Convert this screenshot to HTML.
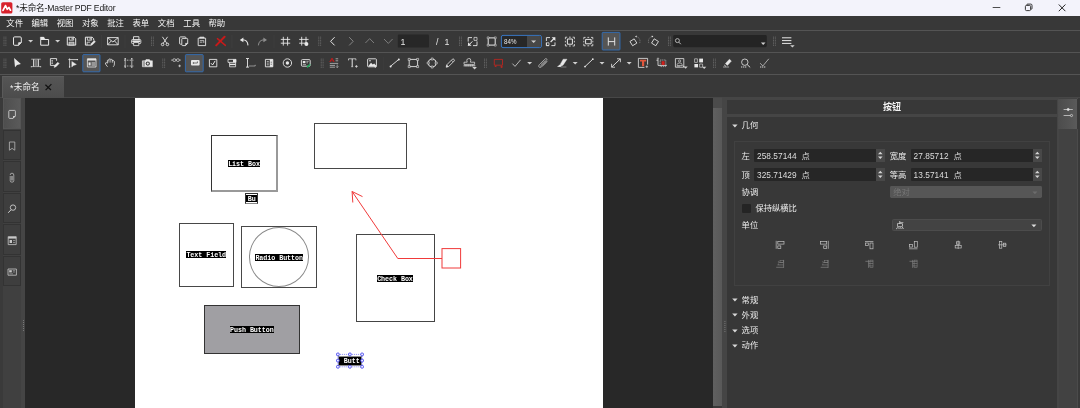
<!DOCTYPE html>
<html><head><meta charset="utf-8"><title>Master PDF Editor</title>
<style>
*{box-sizing:border-box;margin:0;padding:0}
html,body{width:1080px;height:408px;overflow:hidden;background:#383838;font-family:"Liberation Sans","Noto Sans CJK SC",sans-serif;}
.abs,.abs *{position:absolute}
#title{left:0;top:0;width:1080px;height:16px;background:#f3f3fb}
#title .t{left:16px;top:0;font-size:8.6px;line-height:16px;color:#151515;white-space:nowrap;letter-spacing:-0.15px}
#menu{left:0;top:16px;width:1080px;height:14px;background:#383838}
#menu span{top:0;font-size:8.4px;line-height:14px;color:#f4f4f4;white-space:nowrap}
.hl{position:absolute;left:0;width:1080px;height:1px;background:#545454}
#tab{left:2px;top:76px;width:62px;height:22px;background:linear-gradient(#555,#4c4c4c);border-top:1px solid #5e5e5e;border-left:1px solid #5a5a5a}
#tab span{left:6px;top:0;font-size:8.6px;line-height:20px;color:#f0f0f0;white-space:nowrap}
#doc{left:25px;top:98px;width:688px;height:310px;background:#282828}
#page{left:135px;top:98px;width:468px;height:310px;background:#fff}
#lside{left:0;top:98px;width:25px;height:310px;background:linear-gradient(90deg,#3a3a3a 0,#3a3a3a 3px,#404040 3px,#404040 21.4px,#454545 21.4px)}
.lb{left:3.2px;width:18.2px;height:30.6px;background:#3e3e3e;border:1px solid #333}
#vsb{left:713px;top:98px;width:9.2px;height:308px;background:linear-gradient(90deg,#606060,#595959)}
#vsb i{left:0;top:0;width:9px;height:9.5px;background:#4b4b4b}
#gap{left:722px;top:97.4px;width:337px;height:311px;background:#454545}
#panel{left:727px;top:98px;width:330.3px;height:310px;background:#454545}
#phead{left:0;top:2px;width:330.3px;height:13.8px;background:#383838}
#phead span{left:0;width:330px;text-align:center;top:0;font-size:9px;font-weight:bold;line-height:14.6px;color:#f4f4f4}
#pbody{left:0;top:19px;width:330.3px;height:291px;background:#373737}
#inner{left:7px;top:24px;width:316px;height:144px;border:1px solid #414141;background:#383838}
.lab{font-size:8.3px;line-height:12px;color:#ececec;white-space:nowrap}
.inp{background:#262626;height:12.4px;border-radius:1px}
.inp span{left:3px;top:0.9px;font-size:8.3px;line-height:12.4px;color:#dedede;white-space:nowrap;word-spacing:2.6px;letter-spacing:0.05px}
.inp i{right:0;top:0;width:8.6px;height:12.4px;background:#484848}
#rside{left:1057px;top:98px;width:23px;height:310px;background:linear-gradient(90deg,#454545 0,#454545 1.6px,#4a4a4a 1.6px,#4a4a4a 2.2px,#424242 2.2px,#424242 20.2px,#4b4b4b 20.2px,#4b4b4b 20.9px,#393939 20.9px)}
#rcol{display:none}
#rbtn{left:1.2px;top:0.5px;width:18.4px;height:30.2px;background:linear-gradient(90deg,#4c4c4c,#5a5a5a);box-shadow:1.4px 0 0 #393939}
.flab{font-family:"Liberation Mono",monospace;font-size:6.7px;font-weight:bold;line-height:8.5px;height:7.4px;color:#fff;background:#000;white-space:nowrap;overflow:hidden;text-align:center;letter-spacing:-0.05px}
</style></head><body>
<div id="root" style="position:absolute;left:0;top:0;width:1080px;height:408px;will-change:transform">
<div id="title" class="abs"><svg style="left:0;top:0" width="16" height="16" viewBox="0 0 16 16"><rect x="1.2" y="2.2" width="11.2" height="11.3" rx="1.6" fill="#d8212c"/><path d="M3 10.4L5.5 5.6L7.3 9.3L8.9 7.5L10.5 10.2" fill="none" stroke="#fff" stroke-width="1.7" stroke-linejoin="round" stroke-linecap="round"/></svg><span class="t">*未命名-Master PDF Editor</span>
<svg style="left:980px;top:0" width="100" height="16" viewBox="980 0 100 16" fill="none" stroke="#222" stroke-width="0.8"><path d="M992.7 7.5H1000.3"/><rect x="1025.4" y="5.4" width="5.2" height="5.2" rx="1.1" stroke-width="0.9"/><path d="M1026.8 5.4V5Q1026.8 4.1 1027.6 4.1H1030.8Q1032 4.1 1032 5.3V8.4Q1032 9.2 1031.2 9.2H1030.8" stroke-width="0.9"/><path d="M1058.8 4.5L1065.4 11.2M1065.4 4.5L1058.8 11.2" stroke-width="1"/></svg></div>
<div id="menu" class="abs">
<span style="left:6.3px">文件</span>
<span style="left:31.5px">编辑</span>
<span style="left:56.7px">视图</span>
<span style="left:82px">对象</span>
<span style="left:107.2px">批注</span>
<span style="left:132.5px">表单</span>
<span style="left:157.8px">文档</span>
<span style="left:183.3px">工具</span>
<span style="left:208.5px">帮助</span>
</div>
<div class="hl" style="top:30px"></div><div class="hl" style="top:52px"></div><div class="hl" style="top:74px"></div><div class="hl" style="top:97px;background:#474747"></div>
<svg class="abs" style="left:0;top:30px" width="1080" height="46" viewBox="0 30 1080 46" fill="none" stroke="#e8e8e8" stroke-width="0.9" stroke-linejoin="round"><rect x="3.6" y="36.6" width="0.8" height="1.1" fill="#6c6c6c" stroke="none"/><rect x="5.5" y="36.6" width="0.8" height="1.1" fill="#6c6c6c" stroke="none"/><rect x="3.6" y="38.24" width="0.8" height="1.1" fill="#6c6c6c" stroke="none"/><rect x="5.5" y="38.24" width="0.8" height="1.1" fill="#6c6c6c" stroke="none"/><rect x="3.6" y="39.88" width="0.8" height="1.1" fill="#6c6c6c" stroke="none"/><rect x="5.5" y="39.88" width="0.8" height="1.1" fill="#6c6c6c" stroke="none"/><rect x="3.6" y="41.52" width="0.8" height="1.1" fill="#6c6c6c" stroke="none"/><rect x="5.5" y="41.52" width="0.8" height="1.1" fill="#6c6c6c" stroke="none"/><rect x="3.6" y="43.160000000000004" width="0.8" height="1.1" fill="#6c6c6c" stroke="none"/><rect x="5.5" y="43.160000000000004" width="0.8" height="1.1" fill="#6c6c6c" stroke="none"/><rect x="3.6" y="44.8" width="0.8" height="1.1" fill="#6c6c6c" stroke="none"/><rect x="5.5" y="44.8" width="0.8" height="1.1" fill="#6c6c6c" stroke="none"/><rect x="151" y="36.6" width="0.8" height="1.1" fill="#6c6c6c" stroke="none"/><rect x="152.9" y="36.6" width="0.8" height="1.1" fill="#6c6c6c" stroke="none"/><rect x="151" y="38.24" width="0.8" height="1.1" fill="#6c6c6c" stroke="none"/><rect x="152.9" y="38.24" width="0.8" height="1.1" fill="#6c6c6c" stroke="none"/><rect x="151" y="39.88" width="0.8" height="1.1" fill="#6c6c6c" stroke="none"/><rect x="152.9" y="39.88" width="0.8" height="1.1" fill="#6c6c6c" stroke="none"/><rect x="151" y="41.52" width="0.8" height="1.1" fill="#6c6c6c" stroke="none"/><rect x="152.9" y="41.52" width="0.8" height="1.1" fill="#6c6c6c" stroke="none"/><rect x="151" y="43.160000000000004" width="0.8" height="1.1" fill="#6c6c6c" stroke="none"/><rect x="152.9" y="43.160000000000004" width="0.8" height="1.1" fill="#6c6c6c" stroke="none"/><rect x="151" y="44.8" width="0.8" height="1.1" fill="#6c6c6c" stroke="none"/><rect x="152.9" y="44.8" width="0.8" height="1.1" fill="#6c6c6c" stroke="none"/><rect x="318.4" y="36.6" width="0.8" height="1.1" fill="#6c6c6c" stroke="none"/><rect x="320.29999999999995" y="36.6" width="0.8" height="1.1" fill="#6c6c6c" stroke="none"/><rect x="318.4" y="38.24" width="0.8" height="1.1" fill="#6c6c6c" stroke="none"/><rect x="320.29999999999995" y="38.24" width="0.8" height="1.1" fill="#6c6c6c" stroke="none"/><rect x="318.4" y="39.88" width="0.8" height="1.1" fill="#6c6c6c" stroke="none"/><rect x="320.29999999999995" y="39.88" width="0.8" height="1.1" fill="#6c6c6c" stroke="none"/><rect x="318.4" y="41.52" width="0.8" height="1.1" fill="#6c6c6c" stroke="none"/><rect x="320.29999999999995" y="41.52" width="0.8" height="1.1" fill="#6c6c6c" stroke="none"/><rect x="318.4" y="43.160000000000004" width="0.8" height="1.1" fill="#6c6c6c" stroke="none"/><rect x="320.29999999999995" y="43.160000000000004" width="0.8" height="1.1" fill="#6c6c6c" stroke="none"/><rect x="318.4" y="44.8" width="0.8" height="1.1" fill="#6c6c6c" stroke="none"/><rect x="320.29999999999995" y="44.8" width="0.8" height="1.1" fill="#6c6c6c" stroke="none"/><rect x="459" y="36.6" width="0.8" height="1.1" fill="#6c6c6c" stroke="none"/><rect x="460.9" y="36.6" width="0.8" height="1.1" fill="#6c6c6c" stroke="none"/><rect x="459" y="38.24" width="0.8" height="1.1" fill="#6c6c6c" stroke="none"/><rect x="460.9" y="38.24" width="0.8" height="1.1" fill="#6c6c6c" stroke="none"/><rect x="459" y="39.88" width="0.8" height="1.1" fill="#6c6c6c" stroke="none"/><rect x="460.9" y="39.88" width="0.8" height="1.1" fill="#6c6c6c" stroke="none"/><rect x="459" y="41.52" width="0.8" height="1.1" fill="#6c6c6c" stroke="none"/><rect x="460.9" y="41.52" width="0.8" height="1.1" fill="#6c6c6c" stroke="none"/><rect x="459" y="43.160000000000004" width="0.8" height="1.1" fill="#6c6c6c" stroke="none"/><rect x="460.9" y="43.160000000000004" width="0.8" height="1.1" fill="#6c6c6c" stroke="none"/><rect x="459" y="44.8" width="0.8" height="1.1" fill="#6c6c6c" stroke="none"/><rect x="460.9" y="44.8" width="0.8" height="1.1" fill="#6c6c6c" stroke="none"/><rect x="668" y="36.6" width="0.8" height="1.1" fill="#6c6c6c" stroke="none"/><rect x="669.9" y="36.6" width="0.8" height="1.1" fill="#6c6c6c" stroke="none"/><rect x="668" y="38.24" width="0.8" height="1.1" fill="#6c6c6c" stroke="none"/><rect x="669.9" y="38.24" width="0.8" height="1.1" fill="#6c6c6c" stroke="none"/><rect x="668" y="39.88" width="0.8" height="1.1" fill="#6c6c6c" stroke="none"/><rect x="669.9" y="39.88" width="0.8" height="1.1" fill="#6c6c6c" stroke="none"/><rect x="668" y="41.52" width="0.8" height="1.1" fill="#6c6c6c" stroke="none"/><rect x="669.9" y="41.52" width="0.8" height="1.1" fill="#6c6c6c" stroke="none"/><rect x="668" y="43.160000000000004" width="0.8" height="1.1" fill="#6c6c6c" stroke="none"/><rect x="669.9" y="43.160000000000004" width="0.8" height="1.1" fill="#6c6c6c" stroke="none"/><rect x="668" y="44.8" width="0.8" height="1.1" fill="#6c6c6c" stroke="none"/><rect x="669.9" y="44.8" width="0.8" height="1.1" fill="#6c6c6c" stroke="none"/><rect x="773" y="36.6" width="0.8" height="1.1" fill="#6c6c6c" stroke="none"/><rect x="774.9" y="36.6" width="0.8" height="1.1" fill="#6c6c6c" stroke="none"/><rect x="773" y="38.24" width="0.8" height="1.1" fill="#6c6c6c" stroke="none"/><rect x="774.9" y="38.24" width="0.8" height="1.1" fill="#6c6c6c" stroke="none"/><rect x="773" y="39.88" width="0.8" height="1.1" fill="#6c6c6c" stroke="none"/><rect x="774.9" y="39.88" width="0.8" height="1.1" fill="#6c6c6c" stroke="none"/><rect x="773" y="41.52" width="0.8" height="1.1" fill="#6c6c6c" stroke="none"/><rect x="774.9" y="41.52" width="0.8" height="1.1" fill="#6c6c6c" stroke="none"/><rect x="773" y="43.160000000000004" width="0.8" height="1.1" fill="#6c6c6c" stroke="none"/><rect x="774.9" y="43.160000000000004" width="0.8" height="1.1" fill="#6c6c6c" stroke="none"/><rect x="773" y="44.8" width="0.8" height="1.1" fill="#6c6c6c" stroke="none"/><rect x="774.9" y="44.8" width="0.8" height="1.1" fill="#6c6c6c" stroke="none"/><rect x="3.6" y="58.6" width="0.8" height="1.1" fill="#6c6c6c" stroke="none"/><rect x="5.5" y="58.6" width="0.8" height="1.1" fill="#6c6c6c" stroke="none"/><rect x="3.6" y="60.24" width="0.8" height="1.1" fill="#6c6c6c" stroke="none"/><rect x="5.5" y="60.24" width="0.8" height="1.1" fill="#6c6c6c" stroke="none"/><rect x="3.6" y="61.88" width="0.8" height="1.1" fill="#6c6c6c" stroke="none"/><rect x="5.5" y="61.88" width="0.8" height="1.1" fill="#6c6c6c" stroke="none"/><rect x="3.6" y="63.52" width="0.8" height="1.1" fill="#6c6c6c" stroke="none"/><rect x="5.5" y="63.52" width="0.8" height="1.1" fill="#6c6c6c" stroke="none"/><rect x="3.6" y="65.16" width="0.8" height="1.1" fill="#6c6c6c" stroke="none"/><rect x="5.5" y="65.16" width="0.8" height="1.1" fill="#6c6c6c" stroke="none"/><rect x="3.6" y="66.8" width="0.8" height="1.1" fill="#6c6c6c" stroke="none"/><rect x="5.5" y="66.8" width="0.8" height="1.1" fill="#6c6c6c" stroke="none"/><rect x="162.4" y="58.6" width="0.8" height="1.1" fill="#6c6c6c" stroke="none"/><rect x="164.3" y="58.6" width="0.8" height="1.1" fill="#6c6c6c" stroke="none"/><rect x="162.4" y="60.24" width="0.8" height="1.1" fill="#6c6c6c" stroke="none"/><rect x="164.3" y="60.24" width="0.8" height="1.1" fill="#6c6c6c" stroke="none"/><rect x="162.4" y="61.88" width="0.8" height="1.1" fill="#6c6c6c" stroke="none"/><rect x="164.3" y="61.88" width="0.8" height="1.1" fill="#6c6c6c" stroke="none"/><rect x="162.4" y="63.52" width="0.8" height="1.1" fill="#6c6c6c" stroke="none"/><rect x="164.3" y="63.52" width="0.8" height="1.1" fill="#6c6c6c" stroke="none"/><rect x="162.4" y="65.16" width="0.8" height="1.1" fill="#6c6c6c" stroke="none"/><rect x="164.3" y="65.16" width="0.8" height="1.1" fill="#6c6c6c" stroke="none"/><rect x="162.4" y="66.8" width="0.8" height="1.1" fill="#6c6c6c" stroke="none"/><rect x="164.3" y="66.8" width="0.8" height="1.1" fill="#6c6c6c" stroke="none"/><rect x="320.8" y="58.6" width="0.8" height="1.1" fill="#6c6c6c" stroke="none"/><rect x="322.7" y="58.6" width="0.8" height="1.1" fill="#6c6c6c" stroke="none"/><rect x="320.8" y="60.24" width="0.8" height="1.1" fill="#6c6c6c" stroke="none"/><rect x="322.7" y="60.24" width="0.8" height="1.1" fill="#6c6c6c" stroke="none"/><rect x="320.8" y="61.88" width="0.8" height="1.1" fill="#6c6c6c" stroke="none"/><rect x="322.7" y="61.88" width="0.8" height="1.1" fill="#6c6c6c" stroke="none"/><rect x="320.8" y="63.52" width="0.8" height="1.1" fill="#6c6c6c" stroke="none"/><rect x="322.7" y="63.52" width="0.8" height="1.1" fill="#6c6c6c" stroke="none"/><rect x="320.8" y="65.16" width="0.8" height="1.1" fill="#6c6c6c" stroke="none"/><rect x="322.7" y="65.16" width="0.8" height="1.1" fill="#6c6c6c" stroke="none"/><rect x="320.8" y="66.8" width="0.8" height="1.1" fill="#6c6c6c" stroke="none"/><rect x="322.7" y="66.8" width="0.8" height="1.1" fill="#6c6c6c" stroke="none"/><rect x="484" y="58.6" width="0.8" height="1.1" fill="#6c6c6c" stroke="none"/><rect x="485.9" y="58.6" width="0.8" height="1.1" fill="#6c6c6c" stroke="none"/><rect x="484" y="60.24" width="0.8" height="1.1" fill="#6c6c6c" stroke="none"/><rect x="485.9" y="60.24" width="0.8" height="1.1" fill="#6c6c6c" stroke="none"/><rect x="484" y="61.88" width="0.8" height="1.1" fill="#6c6c6c" stroke="none"/><rect x="485.9" y="61.88" width="0.8" height="1.1" fill="#6c6c6c" stroke="none"/><rect x="484" y="63.52" width="0.8" height="1.1" fill="#6c6c6c" stroke="none"/><rect x="485.9" y="63.52" width="0.8" height="1.1" fill="#6c6c6c" stroke="none"/><rect x="484" y="65.16" width="0.8" height="1.1" fill="#6c6c6c" stroke="none"/><rect x="485.9" y="65.16" width="0.8" height="1.1" fill="#6c6c6c" stroke="none"/><rect x="484" y="66.8" width="0.8" height="1.1" fill="#6c6c6c" stroke="none"/><rect x="485.9" y="66.8" width="0.8" height="1.1" fill="#6c6c6c" stroke="none"/><rect x="713" y="58.6" width="0.8" height="1.1" fill="#6c6c6c" stroke="none"/><rect x="714.9" y="58.6" width="0.8" height="1.1" fill="#6c6c6c" stroke="none"/><rect x="713" y="60.24" width="0.8" height="1.1" fill="#6c6c6c" stroke="none"/><rect x="714.9" y="60.24" width="0.8" height="1.1" fill="#6c6c6c" stroke="none"/><rect x="713" y="61.88" width="0.8" height="1.1" fill="#6c6c6c" stroke="none"/><rect x="714.9" y="61.88" width="0.8" height="1.1" fill="#6c6c6c" stroke="none"/><rect x="713" y="63.52" width="0.8" height="1.1" fill="#6c6c6c" stroke="none"/><rect x="714.9" y="63.52" width="0.8" height="1.1" fill="#6c6c6c" stroke="none"/><rect x="713" y="65.16" width="0.8" height="1.1" fill="#6c6c6c" stroke="none"/><rect x="714.9" y="65.16" width="0.8" height="1.1" fill="#6c6c6c" stroke="none"/><rect x="713" y="66.8" width="0.8" height="1.1" fill="#6c6c6c" stroke="none"/><rect x="714.9" y="66.8" width="0.8" height="1.1" fill="#6c6c6c" stroke="none"/><rect x="101.2" y="35" width="0.8" height="13" fill="#3f3f3f" stroke="none"/><rect x="124.6" y="35" width="0.8" height="13" fill="#3f3f3f" stroke="none"/><rect x="231.5" y="35" width="0.8" height="13" fill="#3f3f3f" stroke="none"/><rect x="273.6" y="35" width="0.8" height="13" fill="#3f3f3f" stroke="none"/><rect x="383.2" y="57" width="0.8" height="13" fill="#3c3c3c" stroke="none"/><path d="M14.6 36.9H20.2Q21.3 36.9 21.3 38V42.6L18.4 45.3H14.6Q13.5 45.3 13.5 44.2V38Q13.5 36.9 14.6 36.9Z" stroke-width="1"/><path d="M21.3 42.5H19Q18.4 42.5 18.4 43.1V45.3Z" fill="#e8e8e8" stroke-width="0.5"/><path d="M28.1 40.0H33.1L30.6 42.599999999999994Z" fill="#cfcfcf" stroke="none"/><rect x="40.7" y="39.5" width="7.9" height="5.7" stroke-width="1"/><path d="M40.3 37H43.8L45.4 39.4H40.3Z" fill="#e8e8e8" stroke-width="0.3"/><path d="M55.1 40.0H60.1L57.6 42.599999999999994Z" fill="#cfcfcf" stroke="none"/><path d="M67.3 37.2H74.2L75.7 38.7V45.1H67.3Z" stroke-width="1"/><path d="M69.3 37.2V40.2H73.6V37.2" stroke-width="0.8"/><rect x="69" y="42.2" width="5" height="2.9" fill="#9a9a9a" stroke-width="0.7"/><rect x="71.6" y="37.8" width="1.1" height="1.8" fill="#e8e8e8" stroke="none"/><path d="M90.6 45.1H85.4V37.2H92.2L93.7 38.7V40.4" stroke-width="1"/><path d="M87.4 37.2V40.2H91.6V37.2" stroke-width="0.8"/><path d="M87.1 45.1V42.2H90.2" stroke-width="0.8"/><rect x="89.6" y="37.8" width="1.1" height="1.8" fill="#e8e8e8" stroke="none"/><path d="M90.6 45.6L91.2 43.6L94.2 40.6L95.4 41.8L92.4 44.8Z" fill="#e8e8e8" stroke-width="0.5"/><rect x="107.6" y="37.6" width="10.6" height="7.2"/><path d="M107.6 37.6L112.9 42L118.2 37.6M107.6 44.8L111.4 40.8M118.2 44.8L114.4 40.8"/><path d="M133.5 39.5V36.7H138.9V39.5" stroke-width="0.9"/><rect x="131.6" y="39.5" width="9.2" height="4.1" rx="0.9" stroke-width="0.9"/><rect x="132.3" y="40.4" width="7.8" height="1.7" fill="#e8e8e8" stroke="none"/><rect x="133.6" y="42.5" width="5.2" height="3.1" fill="#383838" stroke-width="0.8"/><path d="M162.4 36.8L167 43.6M167.6 36.8L163 43.6"/><circle cx="162.6" cy="44.4" r="1.3"/><circle cx="167.4" cy="44.4" r="1.3"/><path d="M181.6 44.2H180.4Q179.6 44.2 179.6 43.4V37.7Q179.6 36.9 180.4 36.9H185Q185.8 36.9 185.8 37.7V38.2" stroke-width="0.9"/><path d="M182.6 38.4H186.8Q187.7 38.4 187.7 39.3V43.4L185.5 45.6H182.6Q181.8 45.6 181.8 44.8V39.2Q181.8 38.4 182.6 38.4Z" stroke-width="0.9"/><path d="M187.7 43.3H185.5V45.6Z" fill="#e8e8e8" stroke-width="0.4"/><rect x="198.2" y="38.2" width="7.4" height="7.4"/><path d="M199.8 38.2V37.2H204V38.2" fill="#e8e8e8"/><path d="M199.8 40.6H203.8M199.8 42.2H202.4" stroke-width="0.7"/><path d="M203.8 40.6V43" stroke-width="0.7"/><path d="M224.6 36.8L216.2 45.4" stroke="#c81a1a" stroke-width="2" stroke-linecap="round"/><path d="M217.4 38.6L225.4 45.4" stroke="#c81a1a" stroke-width="1.4" stroke-linecap="round"/><path d="M242.2 39.8Q247.6 39.6 248 45.4" stroke-width="1.1"/><path d="M239.8 40L243.4 37.6V42.2Z" fill="#e8e8e8" stroke="none"/><path d="M258.4 45.4Q258.8 39.8 264.4 39.8" stroke="#8e8e8e" stroke-width="1"/><path d="M267 40L263.4 37.6V42.2Z" fill="#8e8e8e" stroke="none"/><path d="M283.3 36.8V45.6M287.6 36.8V45.6M280.8 39.4H290.2M280.8 43.2H290.2" stroke-width="0.9"/><path d="M301.7 36.8V45.6M306 36.8V43.6M299.2 39.4H308.6M299.2 43.2H305" stroke-width="0.9"/><circle cx="306.4" cy="43.9" r="2" fill="#e8e8e8" stroke="none"/><path d="M334.6 37.2L330.6 41.3L334.6 45.4" stroke-width="1"/><path d="M349.2 37.2L353.2 41.3L349.2 45.4" stroke="#8e8e8e" stroke-width="0.9"/><path d="M365.4 43L369.7 38.6L374 43" stroke="#8e8e8e" stroke-width="0.8"/><path d="M384 39L388.3 43.4L392.6 39" stroke="#8e8e8e" stroke-width="0.8"/><rect x="397.8" y="34.6" width="31.2" height="13" rx="1.2" fill="#272727" stroke="none"/><path d="M468.2 41.6V37.6H472M477 41.4V45.6H473" /><rect x="474" y="37.4" width="3" height="3" stroke-width="0.7"/><path d="M468.2 45.6L472.4 41.4" stroke-width="1"/><path d="M468 45.8V42.2L471.6 45.8Z" fill="#e8e8e8" stroke="none"/><rect x="488.2" y="37.9" width="7" height="7.2" stroke-width="1"/><g fill="#383838" stroke-width="0.5"><rect x="487.2" y="36.9" width="1.8" height="1.8"/><rect x="494.4" y="36.9" width="1.8" height="1.8"/><rect x="487.2" y="44.3" width="1.8" height="1.8"/><rect x="494.4" y="44.3" width="1.8" height="1.8"/></g><rect x="501.4" y="35.4" width="40" height="12.2" rx="1.6" fill="#272727" stroke="#3a7fd4" stroke-width="0.9"/><path d="M527 35.9H539.6Q540.9 35.9 540.9 37.2V45.8Q540.9 47.1 539.6 47.1H527Z" fill="#474747" stroke="none"/><path d="M531.1 40.400000000000006H536.1L533.6 43.0Z" fill="#cfcfcf" stroke="none"/><path d="M550 37.6H546.4V41M546.4 42.6V45.6H549M551.4 45.6H555V42.4"/><rect x="546.4" y="42.8" width="2.6" height="2.8" stroke-width="0.7"/><path d="M550.6 42L554.6 38" stroke-width="1.1"/><path d="M551.6 37.2H555.4V41Z" fill="#e8e8e8" stroke="none"/><rect x="567.4" y="39" width="5" height="5.2" stroke-width="1"/><path d="M567.2 37.2H565.4V39.2M572.6 37.2H574.4V39.2M565.4 44V46H567.2M574.4 44V46H572.6" stroke-width="0.8"/><path d="M569 37.2H570.8M569 46H570.8M565.4 40.8V42.4M574.4 40.8V42.4" stroke-width="0.8"/><rect x="585.6" y="39.4" width="5.6" height="4.4" stroke-width="1"/><path d="M585.6 37.4H583.8V39.4M591 37.4H592.8V39.4M583.8 43.8V45.8H585.6M592.8 43.8V45.8H591" stroke-width="0.8"/><path d="M587.4 37.4H589.2M587.4 45.8H589.2M583.8 40.8V42.4M592.8 40.8V42.4" stroke-width="0.8"/><rect x="602.2" y="32.4" width="17.8" height="17.6" rx="0.8" fill="#555" stroke="#2f74c6" stroke-width="0.8"/><path d="M608.3 37.4V45.6M614.7 37.4V45.6M608.3 41.6H614.7" stroke-width="0.95"/><rect x="630.9" y="39.8" width="5" height="5" transform="rotate(-32 633.4 42.3)" stroke-width="0.8"/><path d="M636.4 36.4Q640 37.8 640 41.4Q639.9 42.6 639.4 43.6" stroke="#9a9a9a" stroke-width="0.7" stroke-dasharray="1 0.8"/><path d="M636.6 35.4V37.6L635 36.5Z" fill="#e8e8e8" stroke="none"/><rect x="652.5" y="39.8" width="5" height="5" transform="rotate(32 655 42.3)" stroke-width="0.8"/><path d="M652 36.4Q648.4 37.8 648.4 41.4Q648.5 42.6 649 43.6" stroke="#9a9a9a" stroke-width="0.7" stroke-dasharray="1 0.8"/><path d="M651.8 35.4V37.6L653.4 36.5Z" fill="#e8e8e8" stroke="none"/><rect x="673.2" y="35" width="93.6" height="12.2" rx="1.4" fill="#242424" stroke="none"/><circle cx="677.4" cy="40.6" r="2" stroke="#d0d0d0" stroke-width="0.8"/><path d="M678.9 42.2L680.8 44.2" stroke="#d0d0d0" stroke-width="0.9"/><path d="M760.9000000000001 42.599999999999994H765.5L763.2 45.0Z" fill="#cfcfcf" stroke="none"/><path d="M782 37.8H791.4M782 40.6H791.4M782 43.4H791.4" stroke-width="1"/><path d="M790.1 45.199999999999996H794.6999999999999L792.4 47.6Z" fill="#cfcfcf" stroke="none"/><path d="M14.1 58.1L15 67.3L17 65L20.9 64.1Z" fill="#e8e8e8" stroke="none"/><path d="M33.7 59.2V66.6M38.3 59.2V66.6" stroke-width="1.1"/><path d="M31.2 59.2H40.8M31.2 66.6H40.8M31.3 66V67.4M40.7 66V67.4" stroke-width="0.6"/><path d="M36 59.6V66.2" stroke="#8a8a8a" stroke-width="1.6"/><path d="M55 65.4H50.4V58.6H56.6V60.8" stroke-width="0.9"/><path d="M52.2 60.4V63.6M51.4 60.6H53M51.4 63.4H53" stroke-width="0.6"/><path d="M54 67.4L54.6 65.4L57.8 62.2L59.2 63.6L56 66.8Z" fill="#e8e8e8" stroke-width="0.4"/><path d="M69.6 58.4V67.2M68.4 59.6H77.6" stroke-width="0.8"/><path d="M71.8 61.4V67L73.4 65.6L76.4 64.4Z" fill="#e8e8e8" stroke-width="0.4"/><circle cx="69.6" cy="67" r="0.7" fill="#e8e8e8" stroke="none"/><circle cx="77.4" cy="59.6" r="0.7" fill="#e8e8e8" stroke="none"/><rect x="82.8" y="54.6" width="17.2" height="17.2" rx="0.8" fill="#555" stroke="#2f74c6" stroke-width="0.8"/><rect x="87.4" y="58.8" width="8.6" height="8.2" stroke-width="0.8"/><path d="M87.4 59.6H96" stroke-width="1.8"/><rect x="88.6" y="62.4" width="2" height="3" fill="#e8e8e8" stroke="none"/><path d="M91.6 63H95M91.6 65H95" stroke-width="0.9"/><path d="M107.6 66.8Q105.4 64.6 105.4 63Q106.2 62 107.4 63.2V60.4Q108.2 59.2 109 60.4V59.4Q109.8 58.2 110.8 59.4V59.8Q111.8 58.8 112.6 60V61Q113.6 60.2 114.4 61.4V64Q114.4 65.6 113.2 66.8" stroke-width="0.8"/><path d="M109 60.4V62.6M110.8 59.8V62.6M112.6 60.4V62.8" stroke-width="0.6"/><path d="M125.2 58.4V67.4M131.8 58.4V67.4" stroke-width="0.7"/><path d="M124 60.2H133.4M124 66H133.4" stroke-width="0.7" stroke-dasharray="1.6 1.2"/><g fill="#e8e8e8" stroke="none"><circle cx="125.2" cy="58.7" r="0.65"/><circle cx="131.8" cy="58.7" r="0.65"/><circle cx="125.2" cy="67.1" r="0.65"/><circle cx="131.8" cy="67.1" r="0.65"/></g><path d="M126.8 63H130.2" stroke="#383838" stroke-width="0"/><path d="M142.4 60.8H145L146 59.6H149.4L150.4 60.8H152.4V66.8H142.4Z" fill="#e8e8e8" stroke-width="0.5"/><circle cx="147.8" cy="63.6" r="2.1" fill="#383838" stroke="none"/><circle cx="147.8" cy="63.6" r="1.1" fill="#e8e8e8" stroke="none"/><rect x="143.6" y="61.2" width="0.8" height="5.2" fill="#383838" stroke="none"/><rect x="172.8" y="58.8" width="3" height="2.6" rx="1.2" stroke-width="0.7"/><rect x="176.4" y="58.8" width="3" height="2.6" rx="1.2" stroke-width="0.7"/><path d="M171 60.1H172.6M179.6 60.1H181" stroke-width="0.6"/><path d="M179.6 64.6V67.2M178.3 65.9H180.9" stroke-width="0.7"/><rect x="185.4" y="54.6" width="17.8" height="17.2" rx="0.8" fill="#555" stroke="#2f74c6" stroke-width="0.8"/><rect x="191" y="60" width="8.6" height="5.4" rx="1" fill="#e8e8e8" stroke="none"/><path d="M193 63H197.4V61.4" stroke="#555" stroke-width="0.8"/><path d="M192.4 63L193.8 62V64Z" fill="#555" stroke="none"/><rect x="209.4" y="59.4" width="7.4" height="7.4" stroke-width="0.9"/><path d="M211 63.2L212.6 65L215.2 60.8" stroke-width="1"/><path d="M228 59.4H236V62.4H228Z" stroke-width="0.8"/><rect x="233" y="59.4" width="3" height="3" fill="#e8e8e8" stroke="none"/><path d="M229.6 62.6V66.8H235.6V62.6" stroke-width="0.8"/><path d="M229.6 64.4H235.6" stroke-width="1.4"/><path d="M247.5 58.5V67.1M246 58.5H249M246 67.1H249" stroke-width="0.9"/><path d="M249 66H255.2V64.8" stroke-width="0.6" stroke="#cfcfcf"/><rect x="265.4" y="59.4" width="7.4" height="7.4" stroke-width="0.9"/><rect x="269.8" y="59.4" width="3" height="7.4" fill="#e8e8e8" stroke="none"/><path d="M266.8 61.4H268.8M266.8 63.1H268.8M266.8 64.8H268.8" stroke-width="0.7"/><path d="M270.6 62.2H272M270.6 64.2H272" stroke="#383838" stroke-width="0.6"/><circle cx="287.4" cy="63" r="4.2" stroke-width="0.9"/><circle cx="287.4" cy="63" r="1.7" fill="#e8e8e8" stroke="none"/><rect x="301.4" y="59.6" width="8.8" height="6.6" rx="1" stroke-width="0.9"/><rect x="302.8" y="61" width="2.6" height="2.2" fill="#e8e8e8" stroke="none"/><path d="M306.4 61.4H308.6M306.4 62.8H308M302.8 64.6H306" stroke-width="0.6"/><path d="M307 67.4L310.2 64.2" stroke="#1fa75a" stroke-width="1.5"/><path d="M329.8 62L332 58.2L334.2 62" stroke="#d01818" stroke-width="1"/><path d="M330.8 60.8H333.2" stroke="#d01818" stroke-width="0.6"/><path d="M335.6 58.8H338.2M335.6 60.8H338.2M329.8 63.4H338.2M329.8 65.4H335M329.8 67.2H335" stroke-width="0.6"/><path d="M337.2 64.4V67.6M336 66.4L337.2 67.6L338.4 66.4" stroke-width="0.5"/><path d="M348.5 60.4V58.8H355.9V60.4M351.2 66.7H353.2" stroke-width="0.7"/><path d="M352.2 58.8V66.6" stroke-width="1"/><path d="M356.4 65V67.8M355 66.4H357.8" stroke-width="0.7"/><rect x="367.6" y="58.8" width="8.8" height="8" rx="0.8" stroke-width="0.9"/><path d="M368.4 66L371 62.8L372.8 64.6L374.2 63.4L376 65.6V66.4H368.4Z" fill="#e8e8e8" stroke="none"/><circle cx="370" cy="60.8" r="0.8" fill="#e8e8e8" stroke="none"/><path d="M375.4 65V68M374 66.6H376.8" stroke-width="0.6"/><path d="M390.6 66.2L398.8 59.4" stroke-width="0.9"/><circle cx="390.6" cy="66.4" r="1" fill="#e8e8e8" stroke="none"/><circle cx="398.8" cy="59.4" r="1" fill="#e8e8e8" stroke="none"/><rect x="409.2" y="59.4" width="8.4" height="7.2" stroke-width="0.9"/><g stroke-width="0.6" fill="#383838"><rect x="408.2" y="58.4" width="2" height="2"/><rect x="416.6" y="58.4" width="2" height="2"/><rect x="408.2" y="65.6" width="2" height="2"/><rect x="416.6" y="65.6" width="2" height="2"/></g><circle cx="432.2" cy="63" r="4" stroke-width="0.9"/><g stroke-width="0.6" fill="#383838"><rect x="431.2" y="58" width="2" height="2"/><rect x="431.2" y="66" width="2" height="2"/><rect x="427.2" y="62" width="2" height="2"/><rect x="435.2" y="62" width="2" height="2"/></g><path d="M446.2 67.2L446.8 64.8L452.4 59.2Q453.2 58.6 454 59.4Q454.8 60.2 454.2 61L448.6 66.6Z" stroke-width="0.8"/><path d="M446.2 67.2L446.8 64.8L448.6 66.6Z" fill="#e8e8e8" stroke="none"/><path d="M451.4 60.2L453.2 62" stroke-width="0.6"/><path d="M468.6 58.6Q470.6 58 470.8 60.2L470.4 62.2H474.6V64.4H464V62.2H467.2L466.8 60.2Q467 58.6 468.6 58.6Z" stroke-width="0.7"/><path d="M463.6 65.8H475.4" stroke-width="0.9"/><path d="M466 64.6V66.4M468.2 64.6V66.4M470.4 64.6V66.4M472.6 64.6V66.4" stroke-width="0.5"/><path d="M472.3 67.0H476.90000000000003L474.6 69.4Z" fill="#cfcfcf" stroke="none"/><path d="M494.3 59.4H502.5V65.2H494.3Z" stroke="#c8241e" stroke-width="0.8" stroke-linejoin="miter"/><path d="M494.3 66.2L496.4 65.2V67.2Z" stroke="none" fill="#c8241e"/><path d="M501.6 65.6V68M500.3 66.9H502.9" stroke="#c8241e" stroke-width="0.8"/><path d="M512.4 63.6L515 66.4L520.6 59.8" stroke-width="0.9" stroke="#c4c4c4"/><path d="M527.1 61.900000000000006H532.1L529.6 64.5Z" fill="#cfcfcf" stroke="none"/><path d="M540 66.6L546.4 60.4Q547.4 59.4 546.6 58.8Q545.8 58.2 544.8 59.2L539.2 64.8Q538 66.2 539.2 67.2Q540.4 68 541.6 66.8L547.6 60.8" stroke-width="0.7" stroke="#c8c8c8"/><path d="M541 64.6L545.4 60.4M542.4 66L546.8 61.8" stroke-width="0.6" stroke="#c8c8c8"/><path d="M560.2 64.4L563.2 59.2H567L562.8 65.4Z" fill="#e8e8e8" stroke-width="0.4"/><path d="M557 66.8L560 64.6L562.4 65.6L560.6 67Z" fill="#e8e8e8" stroke="none"/><path d="M560.6 67H566.4" stroke="#8e8e8e" stroke-width="0.8"/><path d="M572.7 61.900000000000006H577.7L575.2 64.5Z" fill="#cfcfcf" stroke="none"/><path d="M585 66.6L592.8 59.2" stroke-width="0.9"/><circle cx="585" cy="66.6" r="0.9" fill="#e8e8e8" stroke="none"/><circle cx="592.8" cy="59.2" r="0.9" fill="#e8e8e8" stroke="none"/><path d="M599.5 61.900000000000006H604.5L602 64.5Z" fill="#cfcfcf" stroke="none"/><path d="M611.8 67L620.2 59" stroke-width="0.9"/><path d="M617 58.8H620.4V62.2M611.6 63.8V67.2H615" stroke-width="0.8"/><path d="M626.7 61.900000000000006H631.7L629.2 64.5Z" fill="#cfcfcf" stroke="none"/><path d="M638.4 58.4H647.6V64.6M644.4 67.4H638.4V58.4" stroke-width="0.8"/><path d="M640 59.8H646.2V61.6H644.2V66.2H642V61.6H640Z" fill="#e2573c" stroke="none"/><path d="M646.8 65.4V68M645.5 66.7H648.1" stroke-width="0.6"/><path d="M658 58.4V65.4H666.8M656.4 60.2H658" stroke-width="0.8"/><rect x="660.2" y="60" width="5.6" height="6.6" stroke-width="0.6" stroke-dasharray="1.2 0.8"/><rect x="661.6" y="61.2" width="3" height="3.8" fill="#d0201c" stroke="none"/><path d="M657 58.8L658 57.8L659 58.8" stroke-width="0.6"/><rect x="675.4" y="58.6" width="8.4" height="8.6" stroke-width="0.8"/><circle cx="679.6" cy="61" r="1.1" stroke-width="0.6"/><path d="M677.2 65.6V64.4Q677.2 63 679.6 63Q682 63 682 64.4V65.6Z" stroke-width="0.6"/><path d="M676.6 66.2H680" stroke-width="0.5"/><path d="M682.6 65.4L684.4 67.2" stroke-width="0.8"/><path d="M683.5 66.5H687.7L685.6 68.69999999999999Z" fill="#cfcfcf" stroke="none"/><rect x="694.6" y="58.8" width="2.8" height="3.6" stroke-width="0.6"/><rect x="699.2" y="58.6" width="3.8" height="3.8" fill="#e8e8e8" stroke="none"/><rect x="694.4" y="64" width="3.6" height="3.4" fill="#e8e8e8" stroke="none"/><rect x="699.6" y="64" width="3" height="3.2" stroke-width="0.6"/><path d="M702.1 66.7H706.3000000000001L704.2 68.89999999999999Z" fill="#cfcfcf" stroke="none"/><path d="M725.4 63.6L729.4 59.2L731.4 61L727.4 65.4Z" fill="#e8e8e8" stroke-width="0.4"/><path d="M724.2 65L726 66.4" stroke-width="0.8"/><path d="M723.6 67H729.4" stroke-width="1.5" stroke-dasharray="0.8 1.2"/><circle cx="744.8" cy="62.2" r="3.2" stroke-width="0.8"/><path d="M747.2 64.6L750.2 67.4" stroke-width="0.9"/><path d="M741.4 67H747" stroke-width="1.5" stroke-dasharray="0.8 1.2"/><path d="M760.2 63.2L762.8 66L768.8 58.8" stroke-width="0.8" stroke="#c4c4c4"/><path d="M760.4 67H766" stroke-width="1.5" stroke-dasharray="0.8 1.2"/>
<text x="400.4" y="45" font-family="Liberation Sans,sans-serif" font-size="8.8" fill="#e6e6e6" stroke="none">1</text>
<text x="436" y="45" font-family="Liberation Sans,sans-serif" font-size="8.8" fill="#e6e6e6" stroke="none">/</text><text x="444.4" y="45" font-family="Liberation Sans,sans-serif" font-size="8.8" fill="#e6e6e6" stroke="none">1</text>
<text x="504" y="44.4" font-family="Liberation Sans,sans-serif" font-size="7.2" fill="#e6e6e6" stroke="none" textLength="12.4" lengthAdjust="spacingAndGlyphs">84%</text>
</svg>
<div id="tab" class="abs"><span><i style="position:static;font-style:normal;font-family:Liberation Mono,monospace;font-size:9px;display:inline-block;transform:translateY(1.6px);margin-right:-0.6px">*</i>未命名</span><svg style="left:40.6px;top:6.4px" width="9" height="9" viewBox="0 0 9 9"><path d="M1.4 1.8L7 7M7.4 1.2L1.6 7.2" stroke="#111" stroke-width="1.2"/></svg></div>
<div id="doc" class="abs"></div><div id="page" class="abs"></div>
<div id="lside" class="abs">
<div class="lb" style="top:0.4px;background:linear-gradient(90deg,#4e4e4e,#5a5a5a);border-color:#555;"></div>
<div class="lb" style="top:31.9px;"></div>
<div class="lb" style="top:63.4px;"></div>
<div class="lb" style="top:94.9px;"></div>
<div class="lb" style="top:126.4px;"></div>
<div class="lb" style="top:157.9px;"></div>
<svg style="left:0;top:0" width="25" height="310" viewBox="0 98 25 310" fill="none" stroke="#dcdcdc" stroke-width="0.8" stroke-linejoin="round">
<path d="M9.6 110.4H14.6Q15.4 110.4 15.4 111.2V116L13 118.4H9.6Q8.8 118.4 8.8 117.6V111.2Q8.8 110.4 9.6 110.4Z"/><path d="M15.4 116H13.6Q13 116 13 116.6V118.4Z" fill="#dcdcdc" stroke="none"/>
<path d="M9.4 142H14.8V150.2L12.1 148.4L9.4 150.2Z" stroke="#b8b8b8"/>
<path d="M10.2 176V180.6Q10.2 182.2 12 182.2Q13.8 182.2 13.8 180.6V175Q13.8 173.2 12 173.2Q10.2 173.2 10.2 175" stroke="#b8b8b8"/><path d="M12 176V180.4" stroke="#b8b8b8" stroke-width="1.2"/>
<circle cx="13" cy="207.6" r="2.7"/><path d="M11 209.8L8.2 212.8" stroke-width="0.9"/>
<rect x="8.2" y="236.6" width="8" height="8" stroke="#c8c8c8" stroke-width="0.8"/><path d="M8.2 237.8H16.2" stroke="#c8c8c8" stroke-width="1.6"/><rect x="9.6" y="240" width="2.4" height="3" fill="#c8c8c8" stroke="none"/><path d="M13 240.6H15.2M13 242.6H15.2" stroke="#c8c8c8" stroke-width="0.6"/>
<rect x="8" y="269" width="8.4" height="6.2" stroke="#c8c8c8" stroke-width="0.8"/><rect x="9.2" y="270.2" width="2.6" height="2.2" fill="#c8c8c8" stroke="none"/><path d="M12.8 270.6H15M12.8 272H15M9.4 273.8H13" stroke="#c8c8c8" stroke-width="0.5"/>
<rect x="23" y="320" width="1" height="1" fill="#777" stroke="none"/>
<rect x="23" y="322" width="1" height="1" fill="#777" stroke="none"/>
<rect x="23" y="324" width="1" height="1" fill="#777" stroke="none"/>
<rect x="23" y="326" width="1" height="1" fill="#777" stroke="none"/>
<rect x="23" y="328" width="1" height="1" fill="#777" stroke="none"/>
<rect x="23" y="330" width="1" height="1" fill="#777" stroke="none"/>
</svg></div>
<div id="vsb" class="abs"><i></i></div><div id="gap" class="abs"></div>
<svg class="abs" style="left:722px;top:318px" width="5" height="20" viewBox="0 0 5 20"><rect x="2.4" y="3" width="1" height="1" fill="#777"/><rect x="2.4" y="5" width="1" height="1" fill="#777"/><rect x="2.4" y="7" width="1" height="1" fill="#777"/><rect x="2.4" y="9" width="1" height="1" fill="#777"/><rect x="2.4" y="11" width="1" height="1" fill="#777"/><rect x="2.4" y="13" width="1" height="1" fill="#777"/></svg>
<div class="abs" style="left:0;top:0;width:1080px;height:408px;overflow:hidden">
<div style="left:211px;top:135px;width:67px;height:57px;border:1px solid #333;border-right:2px solid #999;border-bottom:2px solid #999;background:#fff"></div>
<div class="flab" style="left:228px;top:159.6px;width:32px">List Box</div>
<div style="left:245.4px;top:193.2px;width:12.4px;height:11px;border:0.8px solid #333;border-bottom:1px solid #888;background:#fff"></div>
<div class="flab" style="left:246.4px;top:195px;width:10.6px">Bu</div>
<div style="left:313.6px;top:122.6px;width:93.4px;height:46.2px;border:1px solid #484848"></div>
<div style="left:178.8px;top:222.8px;width:55px;height:64px;border:1px solid #484848"></div>
<div class="flab" style="left:186.4px;top:251px;width:39.4px">Text Field</div>
<div style="left:241.2px;top:225.8px;width:76.2px;height:62.4px;border:1px solid #484848"></div>
<div style="left:248.8px;top:227px;width:60px;height:59.6px;border:0.8px solid #8a8a8a;border-radius:50%"></div>
<div class="flab" style="left:255.4px;top:254px;width:47.6px">Radio Button</div>
<div style="left:204.2px;top:305px;width:95.8px;height:48.8px;border:1px solid #333;background:#a09fa3"></div>
<div class="flab" style="left:230px;top:326px;width:43.8px">Push Button</div>
<div style="left:356.2px;top:234.4px;width:78.4px;height:87.2px;border:1px solid #484848;border-right:1.6px solid #444;border-bottom:1.6px solid #444"></div>
<div class="flab" style="left:377px;top:274.6px;width:36px">Check Box</div>
<svg style="left:340px;top:180px" width="130" height="100" viewBox="340 180 130 100" fill="none" stroke="#f03a3a" stroke-width="1"><path d="M352.1 191.5L397.8 258.5H442"/><path d="M362.5 196.6L352.1 191.5L352.8 202.5"/><rect x="442" y="248.6" width="18.6" height="19.4"/></svg>
<div style="left:338px;top:355.6px;width:23.8px;height:10.2px;border:1.1px solid #8c8c8c;border-left-width:0.8px;border-right-width:0.8px;background:#000"></div>
<div class="flab" style="left:343.8px;top:357.4px;width:17px;background:none;text-align:left;letter-spacing:0">Butt</div>
<svg style="left:333px;top:350px" width="34" height="22" viewBox="333 350 34 22" fill="#fff" stroke="#3a3aee" stroke-width="0.9"><path d="M337.9 354.4H362.1V366.8H337.9Z" fill="none" stroke-dasharray="1 1" stroke="#3a3aee" stroke-width="0.6"/>
<rect x="336.59999999999997" y="353.09999999999997" width="2.6" height="2.6" rx="0.8"/>
<rect x="348.59999999999997" y="353.09999999999997" width="2.6" height="2.6" rx="0.8"/>
<rect x="360.8" y="353.09999999999997" width="2.6" height="2.6" rx="0.8"/>
<rect x="336.59999999999997" y="359.3" width="2.6" height="2.6" rx="0.8"/>
<rect x="360.8" y="359.3" width="2.6" height="2.6" rx="0.8"/>
<rect x="336.59999999999997" y="365.5" width="2.6" height="2.6" rx="0.8"/>
<rect x="348.59999999999997" y="365.5" width="2.6" height="2.6" rx="0.8"/>
<rect x="360.8" y="365.5" width="2.6" height="2.6" rx="0.8"/>
</svg>
</div>
<div id="panel" class="abs"><div id="phead"><span>按钮</span></div><div id="pbody">
<svg style="left:5.399999999999977px;top:6.599999999999994px" width="6" height="4" viewBox="0 0 6 4"><path d="M0.2 0.4H5.6L2.9 3.4Z" fill="#d8d8d8"/></svg>
<span class="lab" style="left:14.600000000000023px;top:2.200000000000003px">几何</span>
<div id="inner" style="left:7.399999999999977px;top:24.400000000000006px;width:315.6px;height:144.20000000000002px"></div>
<span class="lab" style="left:14.600000000000023px;top:33.0px">左</span>
<div class="inp" style="left:27px;top:32.400000000000006px;width:131px"><span>258.57144 点</span><i></i><svg style="right:0;top:0" width="8.6" height="12.4" viewBox="0 0 8.6 12.4"><path d="M2 5.2L4.3 2.7L6.6 5.2Z M2 7.4L4.3 9.9L6.6 7.4Z" fill="#d4d4d4"/></svg></div>
<span class="lab" style="left:162.79999999999995px;top:33.0px">宽度</span>
<div class="inp" style="left:183.60000000000002px;top:32.400000000000006px;width:130.9999999999999px"><span>27.85712 点</span><i></i><svg style="right:0;top:0" width="8.6" height="12.4" viewBox="0 0 8.6 12.4"><path d="M2 5.2L4.3 2.7L6.6 5.2Z M2 7.4L4.3 9.9L6.6 7.4Z" fill="#d4d4d4"/></svg></div>
<span class="lab" style="left:14.600000000000023px;top:51.80000000000001px">顶</span>
<div class="inp" style="left:27px;top:51.20000000000002px;width:131px"><span>325.71429 点</span><i></i><svg style="right:0;top:0" width="8.6" height="12.4" viewBox="0 0 8.6 12.4"><path d="M2 5.2L4.3 2.7L6.6 5.2Z M2 7.4L4.3 9.9L6.6 7.4Z" fill="#d4d4d4"/></svg></div>
<span class="lab" style="left:162.79999999999995px;top:51.80000000000001px">等高</span>
<div class="inp" style="left:183.60000000000002px;top:51.20000000000002px;width:130.9999999999999px"><span>13.57141 点</span><i></i><svg style="right:0;top:0" width="8.6" height="12.4" viewBox="0 0 8.6 12.4"><path d="M2 5.2L4.3 2.7L6.6 5.2Z M2 7.4L4.3 9.9L6.6 7.4Z" fill="#d4d4d4"/></svg></div>
<span class="lab" style="left:14.600000000000023px;top:69px">协调</span>
<div style="left:163.20000000000005px;top:69.19999999999999px;width:151.79999999999995px;height:12px;background:#565656;border-radius:1.4px"><span class="lab" style="left:3px;top:0;color:#777">绝对</span><svg style="right:4.4px;top:4.6px" width="6" height="4" viewBox="0 0 6 4"><path d="M0.4 0.4H5.4L2.9 3.2Z" fill="#6c6c6c"/></svg></div>
<div style="left:14.799999999999955px;top:87px;width:9.2px;height:9.2px;background:#242424;border-radius:1px"></div>
<span class="lab" style="left:28.399999999999977px;top:85.4px">保持纵横比</span>
<span class="lab" style="left:14.600000000000023px;top:101.80000000000001px">单位</span>
<div style="left:165.39999999999998px;top:101.80000000000001px;width:149.60000000000002px;height:12px;background:#434343;border-radius:1.4px;border:0.6px solid #4c4c4c"><span class="lab" style="left:2.4px;top:-0.6px">点</span><svg style="right:3.8px;top:4px" width="6" height="4" viewBox="0 0 6 4"><path d="M0.4 0.4H5.4L2.9 3.2Z" fill="#dcdcdc"/></svg></div>
<svg style="left:0;top:0" width="328" height="180" viewBox="727 117 328 180">
<path d="M776.2 240.8V248.8" stroke="#c4c4c4" stroke-width="0.7" fill="none"/><rect x="777.8" y="241.60000000000002" width="6.2" height="2.5" stroke="#c4c4c4" stroke-width="0.7" fill="none"/><rect x="777.8" y="245.9" width="3" height="2.6" stroke="#c4c4c4" stroke-width="0.7" fill="none"/>
<path d="M828.3 240.8V248.8" stroke="#c4c4c4" stroke-width="0.7" fill="none"/><rect x="820.5" y="241.60000000000002" width="6.2" height="2.5" stroke="#c4c4c4" stroke-width="0.7" fill="none"/><rect x="823.7" y="245.9" width="3" height="2.6" stroke="#c4c4c4" stroke-width="0.7" fill="none"/>
<path d="M865.0 241.5H873.4000000000001" stroke="#c4c4c4" stroke-width="0.7" fill="none"/><rect x="865.5" y="243.0" width="2.8" height="2.5" stroke="#c4c4c4" stroke-width="0.7" fill="none"/><rect x="870.0" y="243.0" width="3" height="5.8" stroke="#c4c4c4" stroke-width="0.7" fill="none"/>
<path d="M909.0999999999999 248.8H917.5" stroke="#c4c4c4" stroke-width="0.7" fill="none"/><rect x="909.5999999999999" y="244.60000000000002" width="3" height="2.5" stroke="#c4c4c4" stroke-width="0.7" fill="none"/><rect x="914.3" y="241.4" width="3" height="5.8" stroke="#c4c4c4" stroke-width="0.7" fill="none"/>
<path d="M958.2 240.60000000000002V249.0" stroke="#c4c4c4" stroke-width="0.7" fill="none"/><rect x="956.6" y="241.8" width="3.2" height="2.4" stroke="#c4c4c4" stroke-width="0.7" fill="none" fill="#373737"/><rect x="955.2" y="245.60000000000002" width="6" height="2.4" stroke="#c4c4c4" stroke-width="0.7" fill="none" fill="#373737"/>
<path d="M998.1999999999999 244.8H1006.6" stroke="#c4c4c4" stroke-width="0.7" fill="none"/><rect x="999.4" y="241.4" width="2.4" height="6.8" stroke="#c4c4c4" stroke-width="0.7" fill="none"/><rect x="1003.4" y="243.20000000000002" width="2.4" height="3.2" stroke="#c4c4c4" stroke-width="0.7" fill="none"/>
<path d="M783.6 259.9V267.9M776.2 267.29999999999995H783.6" stroke="#858585" stroke-width="0.7" fill="none"/><path d="M778.6 262.5H783.6M777.4 264.9H783.6" stroke="#858585" stroke-width="0.6" fill="none"/><rect x="780" y="260.7" width="3.4" height="1.6" fill="none" stroke="#858585" stroke-width="0.5"/><path d="M778.4 260.9V264.9" stroke="#858585" stroke-width="0.6" stroke-dasharray="1 0.6"/>
<path d="M828.1 259.9V267.9M820.7 267.29999999999995H828.1" stroke="#858585" stroke-width="0.7" fill="none"/><path d="M823.1 262.5H828.1M821.9 264.9H828.1" stroke="#858585" stroke-width="0.6" fill="none"/><rect x="824.5" y="260.7" width="3.4" height="1.6" fill="none" stroke="#858585" stroke-width="0.5"/><path d="M822.9 260.9V264.9" stroke="#858585" stroke-width="0.6" stroke-dasharray="1 0.6"/>
<path d="M868.6 259.9V267.9M865.4000000000001 261.29999999999995H873.2" stroke="#858585" stroke-width="0.7" fill="none"/><path d="M868.6 263.5H873.2M868.6 265.9H873.2" stroke="#858585" stroke-width="0.6" fill="none"/><rect x="870.0" y="260.09999999999997" width="3" height="7.4" fill="none" stroke="#858585" stroke-width="0.5"/>
<path d="M912.6999999999999 259.9V267.9M909.5 261.29999999999995H917.3" stroke="#858585" stroke-width="0.7" fill="none"/><path d="M912.6999999999999 263.5H917.3M912.6999999999999 265.9H917.3" stroke="#858585" stroke-width="0.6" fill="none"/><rect x="914.0999999999999" y="260.09999999999997" width="3" height="7.4" fill="none" stroke="#858585" stroke-width="0.5"/>
</svg>
<svg style="left:5.399999999999977px;top:181.40000000000003px" width="6" height="4" viewBox="0 0 6 4"><path d="M0.2 0.4H5.6L2.9 3.4Z" fill="#d8d8d8"/></svg>
<span class="lab" style="left:14.600000000000023px;top:176.8px">常规</span>
<svg style="left:5.399999999999977px;top:196.40000000000003px" width="6" height="4" viewBox="0 0 6 4"><path d="M0.2 0.4H5.6L2.9 3.4Z" fill="#d8d8d8"/></svg>
<span class="lab" style="left:14.600000000000023px;top:191.8px">外观</span>
<svg style="left:5.399999999999977px;top:211.60000000000002px" width="6" height="4" viewBox="0 0 6 4"><path d="M0.2 0.4H5.6L2.9 3.4Z" fill="#d8d8d8"/></svg>
<span class="lab" style="left:14.600000000000023px;top:207px">选项</span>
<svg style="left:5.399999999999977px;top:226.8px" width="6" height="4" viewBox="0 0 6 4"><path d="M0.2 0.4H5.6L2.9 3.4Z" fill="#d8d8d8"/></svg>
<span class="lab" style="left:14.600000000000023px;top:222.2px">动作</span>
</div></div>
<div id="rside" class="abs"><div id="rcol"></div><div id="rbtn"></div><svg style="left:0;top:0" width="23" height="31" viewBox="1057 98 23 31" fill="none" stroke="#e0e0e0" stroke-width="0.7"><path d="M1063.6 109.5H1072.8M1063.6 115.5H1070.4"/><circle cx="1068.2" cy="109.5" r="1.1" fill="#e0e0e0"/><circle cx="1071.5" cy="115.5" r="1.1" /></svg></div>
</div></body></html>
